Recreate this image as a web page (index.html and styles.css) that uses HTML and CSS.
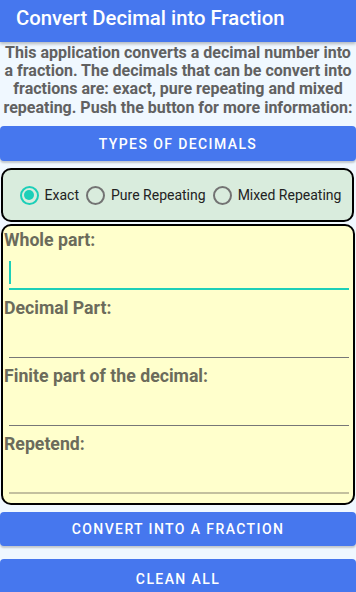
FILE: index.html
```html
<!DOCTYPE html>
<html>
<head>
<meta charset="utf-8">
<link rel="stylesheet" href="styles.css">
</head>
<body>
<header class="appbar"><span class="title">Convert Decimal into Fraction</span></header>
<p class="desc">This application converts a decimal number into a fraction. The decimals that can be convert into fractions are: exact, pure repeating and mixed repeating. Push the button for more information:</p>
<button class="btn">TYPES OF DECIMALS</button>
<div class="radios">
  <label class="radio"><span class="circle on"></span><span class="rlabel">Exact</span></label>
  <label class="radio"><span class="circle"></span><span class="rlabel">Pure Repeating</span></label>
  <label class="radio"><span class="circle"></span><span class="rlabel">Mixed Repeating</span></label>
</div>
<div class="fields">
  <div class="field">
    <div class="flabel">Whole part:</div>
    <div class="input focus"><span class="cursor"></span></div>
  </div>
  <div class="field">
    <div class="flabel">Decimal Part:</div>
    <div class="input"></div>
  </div>
  <div class="field">
    <div class="flabel">Finite part of the decimal:</div>
    <div class="input"></div>
  </div>
  <div class="field">
    <div class="flabel">Repetend:</div>
    <div class="input disabled"></div>
  </div>
</div>
<button class="btn btn-convert">CONVERT INTO A FRACTION</button>
<button class="btn btn-clean">CLEAN ALL</button>
</body>
</html>
```
FILE: styles.css
```css
html, body {
  margin: 0;
  padding: 0;
  background: #f0f8ff;
  font-family: Roboto, "Liberation Sans", sans-serif;
  overflow: hidden;
  height: 592px;
}
.appbar {
  height: 42px;
  background: #4677ee;
  box-shadow: 0 2px 3px rgba(0,0,0,0.25);
  display: flex;
  align-items: center;
  padding-left: 16px;
  box-sizing: border-box;
}
.title {
  color: #fff;
  font-size: 20.3px;
  font-weight: 500;
  margin-top: -7px;
}
.desc {
  margin: 0;
  padding: 2px 2px 0;
  height: 84px;
  box-sizing: border-box;
  text-align: center;
  color: #616161;
  font-weight: 700;
  font-size: 16px;
  line-height: 18.2px;
}
.btn {
  display: block;
  width: 100%;
  height: 35px;
  border: none;
  border-radius: 4px;
  background: #4677ee;
  color: #fff;
  font-family: Roboto, "Liberation Sans", sans-serif;
  font-size: 14px;
  font-weight: 500;
  letter-spacing: 1.4px;
  box-shadow: 0 2px 2px rgba(0,0,0,0.2);
  margin: 0;
  padding: 0;
}
.radios {
  margin: 7px 2px 0 1px;
  height: 54px;
  box-sizing: border-box;
  border: 2px solid #000;
  border-radius: 10px;
  background: #d9ecdd;
  display: flex;
  align-items: center;
  justify-content: center;
  gap: 7px;
  padding-left: 6px;
}
.radio {
  display: flex;
  align-items: center;
  gap: 6px;
}
.circle {
  width: 19px;
  height: 19px;
  box-sizing: border-box;
  border: 2px solid #737373;
  border-radius: 50%;
  position: relative;
}
.circle.on {
  border-color: #1ccfb8;
}
.circle.on::after {
  content: "";
  position: absolute;
  left: 2.5px;
  top: 2.5px;
  width: 10px;
  height: 10px;
  border-radius: 50%;
  background: #1ccfb8;
}
.rlabel {
  font-size: 14px;
  color: #222;
}
.fields {
  margin: 2px 1px 0 1px;
  height: 281px;
  box-sizing: border-box;
  border: 2px solid #000;
  border-radius: 10px;
  background: #ffffcc;
  padding: 4px 4px 0 1px;
}
.field {
  margin-bottom: 8px;
}
.flabel {
  font-size: 17.7px;
  line-height: 21px;
  font-weight: 700;
  color: #6b6b5b;
}
.input {
  height: 39px;
  box-sizing: border-box;
  margin: 0 0 0 5px;
  border-bottom: 1.5px solid #777;
  position: relative;
}
.input.focus {
  border-bottom: 2px solid #1ccfb8;
}
.input.disabled {
  border-bottom: 2px solid #c3c09e;
}
.cursor {
  position: absolute;
  left: 0;
  top: 10px;
  width: 2px;
  height: 23px;
  background: #1ccfb8;
}
.btn-convert {
  margin-top: 7px;
  height: 34px;
}
.btn-clean {
  margin-top: 13px;
  height: 40px;
}
```
